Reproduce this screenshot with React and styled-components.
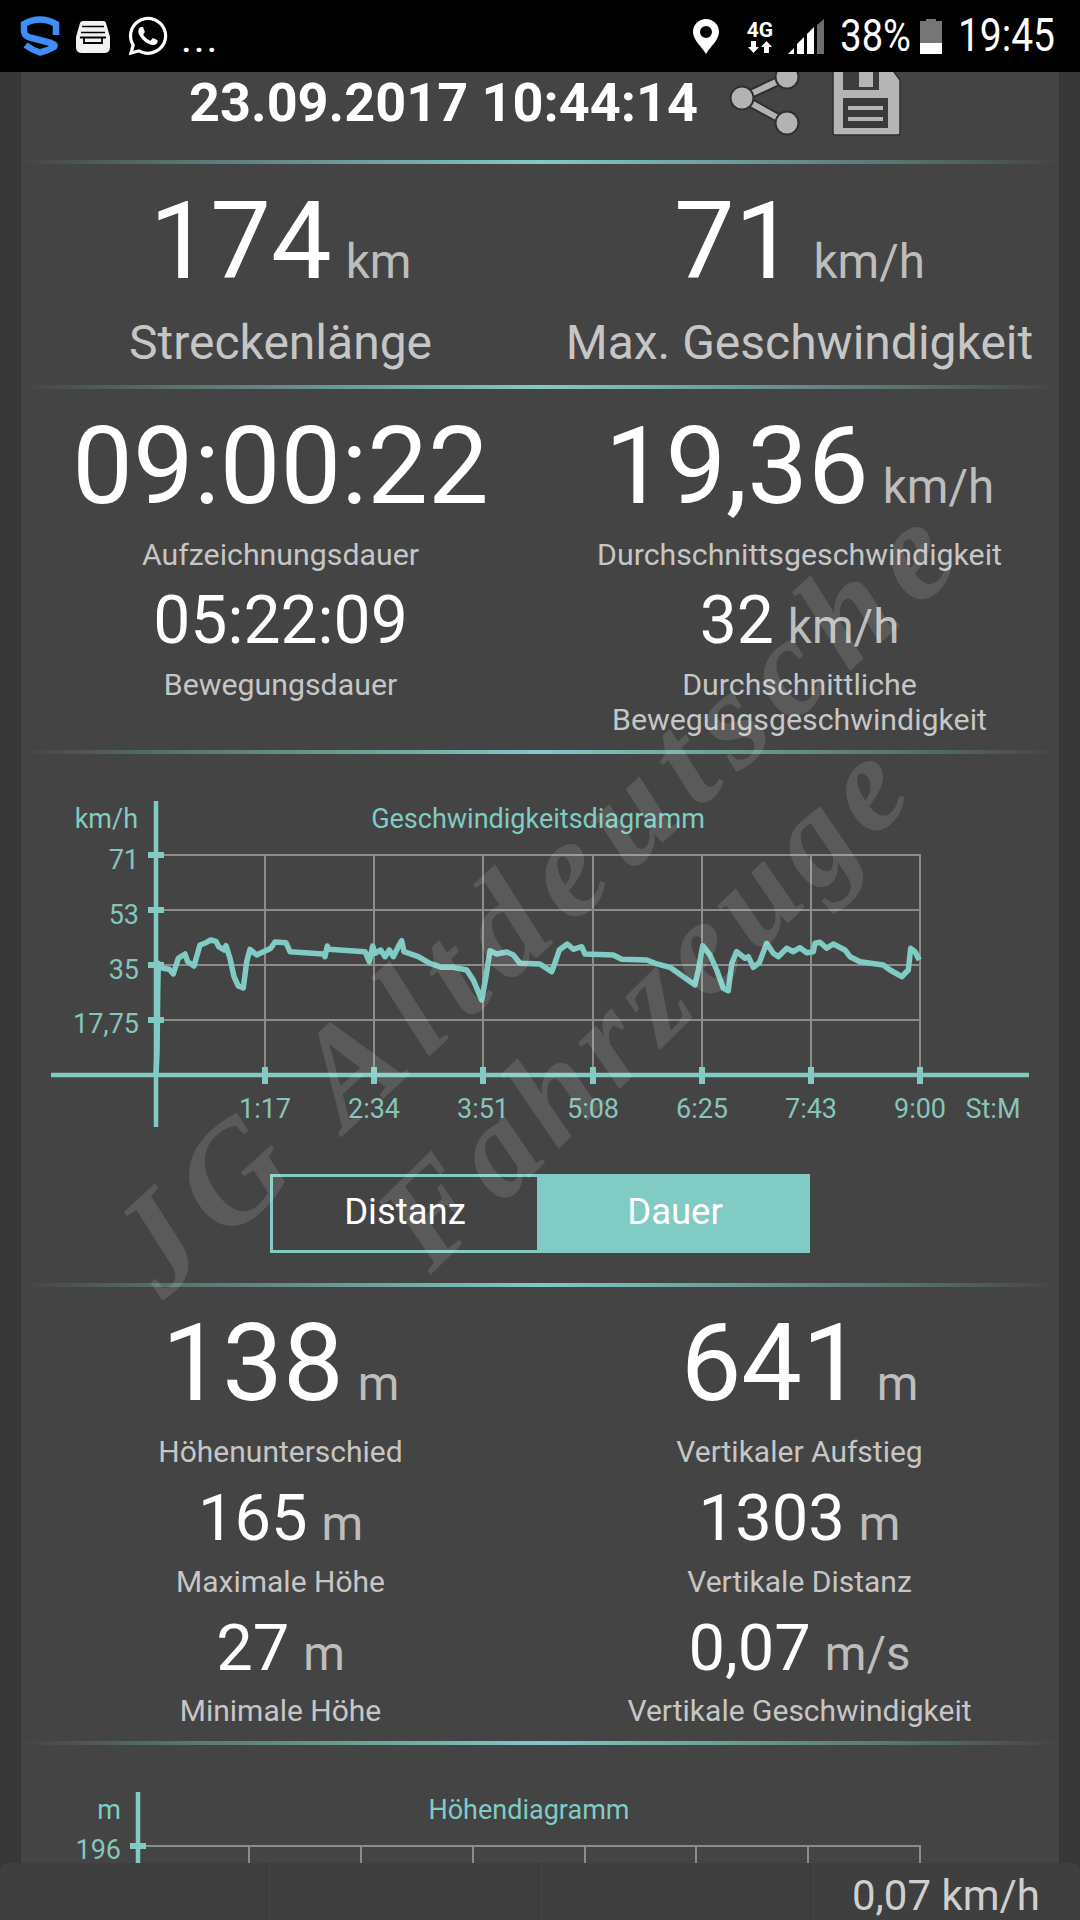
import React from "react";
import styled, { createGlobalStyle } from "styled-components";
import { FaWhatsapp } from "react-icons/fa";

const TEAL = "#80cbc4";

const Global = createGlobalStyle`
  html, body { margin: 0; padding: 0; background: #373737; }
  * { box-sizing: border-box; }
  body { font-family: Roboto, "Liberation Sans", sans-serif; }
`;

const Screen = styled.div`
  position: relative;
  width: 1080px;
  height: 1920px;
  overflow: hidden;
  display: flex;
  flex-direction: column;
  background: #373737;
`;

const StatusBar = styled.div`
  height: 72px;
  flex: none;
  background: #000;
  color: #fff;
  display: flex;
  align-items: center;
  justify-content: space-between;
  padding: 0 25px 0 20px;
`;

const StatusGroup = styled.div`
  display: flex;
  align-items: center;
  gap: ${(p) => p.$gap}px;
`;

const Dots = styled.span`
  font-size: 30px;
  letter-spacing: 4px;
  font-weight: 700;
  line-height: 30px;
  margin: 12px 0 0 -3px;
`;

const FourG = styled.div`
  width: 29px;
  display: flex;
  flex-direction: column;
  align-items: center;
  font-size: 21px;
  font-weight: 700;
  line-height: 21px;
  margin: 0 14px 0 26px;
`;

const StatusText = styled.span`
  font-size: ${(p) => p.$size}px;
  line-height: 50px;
  margin-left: ${(p) => p.$ml}px;
  transform: scaleY(1.18);
`;

const Main = styled.main`
  flex: 1;
  min-height: 0;
  margin: 0 21px;
  background: #444444;
  overflow: hidden;
`;

const Header = styled.header`
  height: 88px;
  display: flex;
  padding-left: 168px;
  overflow: hidden;
`;

const DateText = styled.h1`
  width: 536px;
  margin: 0;
  font-size: 54px;
  font-weight: 700;
  line-height: 62px;
  color: #fff;
  white-space: nowrap;
`;

const Divider = styled.div`
  height: 4px;
  background: linear-gradient(90deg, rgba(128,203,196,0) 0%, rgba(128,203,196,.35) 15%, ${TEAL} 50%, rgba(128,203,196,.35) 85%, rgba(128,203,196,0) 100%);
`;

const StatGrid = styled.section`
  display: grid;
  grid-template-columns: 1fr 1fr;
  padding: ${(p) => p.$top}px 0 ${(p) => p.$bottom}px;
`;

const Column = styled.div`
  display: flex;
  flex-direction: column;
  align-items: center;
`;

const ValueRow = styled.div`
  display: flex;
  align-items: baseline;
  justify-content: center;
  color: #fff;
  white-space: nowrap;
  height: ${(p) => (p.$big ? 110 : 70)}px;
  line-height: ${(p) => (p.$big ? 110 : 70)}px;
  font-size: ${(p) => (p.$big ? 108 : p.$size || 66)}px;
  margin-top: ${(p) => p.$mt || 0}px;
`;

const Unit = styled.span`
  font-size: 47.5px;
  color: #bdbdbd;
  margin-left: ${(p) => p.$gap ?? 14}px;
`;

const Label = styled.div`
  color: #c6c6c6;
  text-align: center;
  white-space: nowrap;
  font-size: ${(p) => p.$size || 30.3}px;
  line-height: ${(p) => p.$lh || 35}px;
  margin-top: ${(p) => p.$mt || 0}px;
`;

const ChartSection = styled.section`
  display: flex;
  flex-direction: column;
  align-items: center;
  padding-bottom: 30px;
`;

const ChartSvg = styled.svg`
  display: block;
  flex: none;
`;

const GridLine = styled.line`
  stroke: #8c8c8a;
  stroke-width: 2;
`;

const AxisLine = styled.line`
  stroke: ${TEAL};
  stroke-width: ${(p) => p.$w || 4.5};
`;

const Curve = styled.path`
  fill: none;
  stroke: ${TEAL};
  stroke-width: 5.5;
  stroke-linejoin: round;
`;

const ChartText = styled.text`
  fill: ${(p) => (p.$muted ? "#86c4bc" : TEAL)};
  font-family: Roboto, sans-serif;
  font-size: ${(p) => p.$size || 27}px;
  dominant-baseline: central;
`;

const Toggle = styled.div`
  width: 540px;
  height: 79px;
  display: flex;
  border: 3px solid ${TEAL};
  flex: none;
`;

const ToggleItem = styled.button`
  border: 0;
  padding: 0 0 4px ${(p) => (p.$active ? 6 : 0)}px;
  margin: 0;
  font: inherit;
  font-size: 36.5px;
  color: #fff;
  width: ${(p) => p.$w}px;
  background: ${(p) => (p.$active ? TEAL : "transparent")};
`;

const BottomBar = styled.footer`
  position: relative;
  z-index: 3;
  height: 57px;
  flex: none;
  display: grid;
  grid-template-columns: 267px 272px 272px 1fr;
  background: #3f3f3f;
  border-radius: 8px 8px 0 0;
`;

const BarCell = styled.div`
  border-right: 1px solid #383838;
  &:last-child { border-right: 0; }
  text-align: right;
  padding: 8px 40px 0 0;
  font-size: 42px;
  line-height: 50px;
  color: #cfcfcf;
  white-space: nowrap;
`;

const Watermark = styled.div`
  position: absolute;
  left: ${(p) => p.$x}px;
  top: ${(p) => p.$y - 160}px;
  height: 160px;
  line-height: 160px;
  transform-origin: 0 100%;
  transform: rotate(${(p) => p.$deg}deg);
  font-family: "Liberation Serif", serif;
  font-style: italic;
  font-weight: 700;
  font-size: ${(p) => p.$size}px;
  letter-spacing: ${(p) => p.$track}px;
  color: rgba(255, 255, 255, 0.12);
  white-space: nowrap;
  pointer-events: none;
  z-index: 2;
`;

const fromA = (pts) => pts.map(([x, y]) => [30 + x / 3, 780 + y / 3]);
const fromB = (pts) => pts.map(([x, y]) => [540 + x / 3, 780 + y / 3]);

const CURVE = [
  ...fromA([[378,880],[381,820],[383,640],[385,550],[398,565],[418,568],[430,582],[445,535],[465,522],[473,545],[492,558],[510,495],[528,488],[542,480],[558,484],[566,500],[582,510],[588,497],[600,535],[612,590],[625,618],[640,624],[650,545],[660,508],[680,525],[700,515],[712,510],[722,505],[735,486],[768,488],[780,515],[880,522],[885,530],[892,498],[897,508],[1005,515],[1018,545],[1028,498],[1035,520],[1052,510],[1065,530],[1078,510],[1090,530],[1105,500],[1115,482],[1122,515],[1165,530],[1200,550],[1235,562],[1270,562],[1310,570],[1330,600],[1355,660],[1368,590],[1380,512],[1400,522],[1430,516],[1450,525],[1470,550],[1530,552]]),
  ...fromB([[35,575],[48,540],[58,510],[82,492],[100,508],[125,500],[135,522],[220,525],[245,538],[320,540],[345,550],[390,562],[430,590],[465,615],[475,570],[488,497],[510,525],[530,570],[550,625],[565,632],[575,550],[590,515],[615,535],[625,530],[640,562],[658,548],[680,490],[700,520],[715,530],[740,505],[760,515],[780,503],[800,518],[820,515],[825,490],[840,487],[860,505],[880,492],[915,510],[930,530],[960,545],[1030,555],[1050,570],[1085,590],[1105,570],[1112,505],[1125,515],[1138,540]]),
];
const curvePath = "M" + CURVE.map(([x, y]) => `${x.toFixed(1)} ${y.toFixed(1)}`).join("L");

const SPEED_X = [[265,"1:17"],[374,"2:34"],[483,"3:51"],[593,"5:08"],[702,"6:25"],[811,"7:43"],[920,"9:00"]];
const SPEED_Y = [[855,"71",860],[910,"53",915],[965,"35",970],[1020,"17,75",1024]];

function SpeedChart() {
  return (
    <ChartSvg width="1038" height="420" viewBox="21 754 1038 420">
      {SPEED_Y.map(([y]) => <GridLine key={y} x1="156" x2="921" y1={y} y2={y} />)}
      {SPEED_X.map(([x]) => <GridLine key={x} x1={x} x2={x} y1="855" y2="1075" />)}
      <Curve d={curvePath} />
      <AxisLine x1="156" x2="156" y1="801" y2="1127" />
      <AxisLine x1="51" x2="1029" y1="1075" y2="1075" />
      {SPEED_Y.map(([y]) => <AxisLine key={y} $w={6} x1="148" x2="164" y1={y} y2={y} />)}
      {SPEED_X.map(([x]) => <AxisLine key={x} $w={6} x1={x} x2={x} y1="1067" y2="1084" />)}
      <ChartText x="138" y="819" textAnchor="end">km/h</ChartText>
      <ChartText x="538" y="819" textAnchor="middle">Geschwindigkeitsdiagramm</ChartText>
      {SPEED_Y.map(([y, t, ty]) => <ChartText $muted key={t} x="139" y={ty} textAnchor="end">{t}</ChartText>)}
      {SPEED_X.map(([x, t]) => <ChartText $muted key={t} x={x} y="1109" textAnchor="middle">{t}</ChartText>)}
      <ChartText $muted x="993" y="1109" textAnchor="middle">St:M</ChartText>
    </ChartSvg>
  );
}

function AltitudeChart() {
  const xs = [249, 361, 473, 585, 696, 808, 920];
  return (
    <ChartSvg width="1038" height="118" viewBox="21 1745 1038 118">
      <GridLine x1="138" x2="921" y1="1846" y2="1846" />
      {xs.map((x) => <GridLine key={x} x1={x} x2={x} y1="1846" y2="1863" />)}
      <AxisLine x1="138" x2="138" y1="1792" y2="1863" />
      <AxisLine $w={6} x1="130" x2="146" y1="1846" y2="1846" />
      <ChartText x="121" y="1810" textAnchor="end">m</ChartText>
      <ChartText x="529" y="1810" textAnchor="middle">Höhendiagramm</ChartText>
      <ChartText $muted x="121" y="1850" textAnchor="end">196</ChartText>
    </ChartSvg>
  );
}

const ShieldLogo = () => (
  <svg width="40" height="40" viewBox="19 16 40 40">
    <path d="M55 35V24Q39 15 23 24V31Q23 36 29 37.500L50 43Q55 44.500 53 47Q46 51 39 52.500Q31 50 24.500 45" fill="none" stroke="#3f8ef5" strokeWidth="6.500" />
  </svg>
);

const InboxIcon = () => (
  <svg width="36" height="33" viewBox="0 0 36 33">
    <path d="M5 3Q5.500 1 8 1H28Q30.500 1 31 3L35 17V27Q35 33 29 33H7Q1 33 1 27V17Z" fill="#f2f2f2" />
    <path d="M7 6.500H29M6 12.500H30" stroke="#000" strokeWidth="1.600" />
    <path d="M5 17.500H31M9 18V23H27V18" fill="none" stroke="#000" strokeWidth="1.800" />
  </svg>
);

const PinIcon = () => (
  <svg width="26" height="35" viewBox="0 0 26 35">
    <path fillRule="evenodd" d="M13 0A13 13 0 0 1 26 13C26 21 17 28 13 35C9 28 0 21 0 13A13 13 0 0 1 13 0ZM13 7A6 6 0 1 0 13 19A6 6 0 1 0 13 7Z" fill="#fff" />
  </svg>
);

const DataArrows = () => (
  <svg width="26" height="12" viewBox="0 0 26 12">
    <path d="M9 0V6H12L6.500 12L1 6H4V0ZM17 12V6H14L19.500 0L25 6H22V12Z" fill="#fff" />
  </svg>
);

const SignalIcon = () => (
  <svg width="36" height="35" viewBox="0 0 36 35">
    <path d="M0 35L6 29V35Z" fill="#fff" />
    <path d="M9 35V25L16 18V35Z" fill="#fff" />
    <path d="M19 35V15L26 8V35Z" fill="#fff" />
    <path d="M29 35V6L36 0V35Z" fill="#6d6d6d" />
  </svg>
);

const BatteryIcon = () => (
  <svg width="22" height="35" viewBox="0 0 22 35" style={{ marginLeft: 9 }}>
    <path d="M6 0H16V2H22V24H0V2H6Z" fill="#767676" />
    <path d="M0 24H22V35H0Z" fill="#fff" />
  </svg>
);

const ShareIcon = () => (
  <svg width="80" height="88" viewBox="725 72 80 88" style={{ flex: "none" }}>
    <g fill="#b3b3b3" stroke="#2f2f2f" strokeWidth="2">
      <path d="M742 98L787 77M742 98L787 123" stroke="#2f2f2f" strokeWidth="10" fill="none" />
      <path d="M742 98L787 77M742 98L787 123" stroke="#b3b3b3" strokeWidth="6" fill="none" />
      <circle cx="742" cy="98" r="11.500" />
      <circle cx="787" cy="77" r="11.500" />
      <circle cx="787" cy="123" r="11.500" />
    </g>
  </svg>
);

const SaveIcon = () => (
  <svg width="78" height="88" viewBox="828 72 78 88" style={{ flex: "none", marginLeft: 23 }}>
    <path d="M833 60H885L900 80V133Q900 135 898 135H835Q833 135 833 133Z" fill="#b5b5b5" stroke="#2f2f2f" strokeWidth="1.500" />
    <path d="M843 60H879V90H843Z" fill="#3d3d3d" />
    <path d="M859 60H873V87H859Z" fill="#b5b5b5" />
    <path d="M843 98H888V128H843Z" fill="#3a3a3a" />
    <path d="M848 106H883V110H848ZM848 117H883V121H848Z" fill="#b5b5b5" />
  </svg>
);

const Stat = ({ big, value, unit, gap, mt, size }) => (
  <ValueRow $big={big} $mt={mt} $size={size}>
    {value}
    {unit && <Unit $gap={gap}>{unit}</Unit>}
  </ValueRow>
);

export default function App() {
  return (
    <Screen>
      <Global />
      <StatusBar>
        <StatusGroup $gap={15}>
          <ShieldLogo />
          <InboxIcon />
          <FaWhatsapp size={44} color="#fff" />
          <Dots>...</Dots>
        </StatusGroup>
        <StatusGroup $gap={0}>
          <PinIcon />
          <FourG>
            4G
            <DataArrows />
          </FourG>
          <SignalIcon />
          <StatusText $size={38} $ml={16}>38%</StatusText>
          <BatteryIcon />
          <StatusText $size={39} $ml={16}>19:45</StatusText>
        </StatusGroup>
      </StatusBar>

      <Main>
        <Header>
          <DateText>23.09.2017 10:44:14</DateText>
          <ShareIcon />
          <SaveIcon />
        </Header>
        <Divider />
        <StatGrid $top={22} $bottom={17}>
          <Column>
            <Stat big value="174" unit="km" />
            <Label $size={48} $lh={50} $mt={22}>Streckenlänge</Label>
          </Column>
          <Column>
            <Stat big value="71" unit="km/h" gap={18} />
            <Label $size={48} $lh={50} $mt={22}>Max. Geschwindigkeit</Label>
          </Column>
        </StatGrid>
        <Divider />
        <StatGrid $top={22} $bottom={13}>
          <Column>
            <Stat big value="09:00:22" />
            <Label $lh={36} $mt={16}>Aufzeichnungsdauer</Label>
            <Stat value="05:22:09" mt={13} />
            <Label $mt={11}>Bewegungsdauer</Label>
          </Column>
          <Column>
            <Stat big value="19,36" unit="km/h" />
            <Label $lh={36} $mt={16}>Durchschnittsgeschwindigkeit</Label>
            <Stat value="32" unit="km/h" mt={13} />
            <Label $mt={11}>Durchschnittliche<br />Bewegungsgeschwindigkeit</Label>
          </Column>
        </StatGrid>
        <Divider />
        <ChartSection>
          <SpeedChart />
          <Toggle>
            <ToggleItem $w={264}>Distanz</ToggleItem>
            <ToggleItem $w={270} $active>Dauer</ToggleItem>
          </Toggle>
        </ChartSection>
        <Divider />
        <StatGrid $top={21} $bottom={12}>
          <Column>
            <Stat big value="138" unit="m" />
            <Label $size={30} $lh={36} $mt={16}>Höhenunterschied</Label>
            <Stat value="165" unit="m" mt={13} size={65} />
            <Label $size={30} $lh={36} $mt={11}>Maximale Höhe</Label>
            <Stat value="27" unit="m" mt={13} size={65} />
            <Label $size={30} $lh={36} $mt={10}>Minimale Höhe</Label>
          </Column>
          <Column>
            <Stat big value="641" unit="m" />
            <Label $size={30} $lh={36} $mt={16}>Vertikaler Aufstieg</Label>
            <Stat value="1303" unit="m" mt={13} size={65} />
            <Label $size={30} $lh={36} $mt={11}>Vertikale Distanz</Label>
            <Stat value="0,07" unit="m/s" mt={13} size={65} />
            <Label $size={30} $lh={36} $mt={10}>Vertikale Geschwindigkeit</Label>
          </Column>
        </StatGrid>
        <Divider />
        <AltitudeChart />
      </Main>

      <BottomBar>
        <BarCell />
        <BarCell />
        <BarCell />
        <BarCell>0,07 km/h</BarCell>
      </BottomBar>

      <Watermark $x={185} $y={1325} $deg={-42.5} $size={140} $track={16}>JG Altdeutsche</Watermark>
      <Watermark $x={455} $y={1300} $deg={-44.5} $size={135} $track={10}>Fahrzeuge</Watermark>
    </Screen>
  );
}
